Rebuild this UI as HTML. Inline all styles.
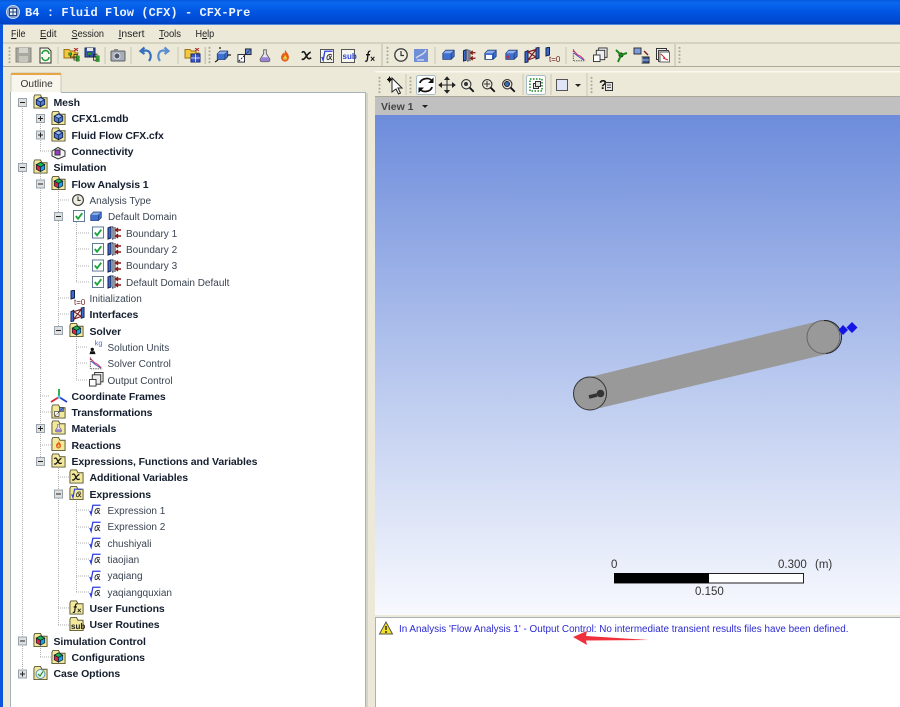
<!DOCTYPE html>
<html><head><meta charset="utf-8"><title>B4 : Fluid Flow (CFX) - CFX-Pre</title>
<style>
html,body{margin:0;padding:0;background:#ece9d8;width:900px;height:707px;overflow:hidden}
svg{display:block;font-family:"Liberation Sans",sans-serif;filter:blur(.3px)}
.m{font-size:10.5px;fill:#222}
.b{font-size:10.5px;font-weight:bold;fill:#141e2e;letter-spacing:-.09px}
.n{font-size:10px;fill:#3a4452}
.l{stroke:#b0b0b0;stroke-width:1;stroke-dasharray:1 1;fill:none}
.s{font-size:11.5px;fill:#333}
</style></head><body>
<svg width="900" height="707" viewBox="0 0 900 707" xmlns="http://www.w3.org/2000/svg">
<defs>
<linearGradient id="tb" x1="0" y1="0" x2="0" y2="1"><stop offset="0" stop-color="#0758dc"/><stop offset=".12" stop-color="#0a68ee"/><stop offset=".5" stop-color="#0055e2"/><stop offset=".9" stop-color="#0048d0"/><stop offset="1" stop-color="#0040b8"/></linearGradient>
<linearGradient id="vp" x1="0" y1="0" x2="0" y2="1"><stop offset="0" stop-color="#6d8cdb"/><stop offset=".55" stop-color="#bccbef"/><stop offset="1" stop-color="#f8f9fe"/></linearGradient>
<symbol id="f" viewBox="0 0 16 16"><path d="M1 3V15H15V4H9.500L8 1H2Z" fill="#f3e99c" stroke="#5a5636"/></symbol>
<symbol id="cb" viewBox="0 0 16 16"><path d="M8 3.500L12.500 6V11L8 13.500L3.500 11V6Z" fill="#4f7bd4" stroke="#13254d"/><path d="M3.500 6L8 8.500L12.500 6M8 8.500V13.500" fill="none" stroke="#13254d" stroke-width=".8"/><path d="M8 4.500L11.200 6.300L8 7.800L4.800 6.300Z" fill="#9cbcf0"/></symbol>
<symbol id="cc" viewBox="0 0 16 16"><path d="M3.500 6L8 3.500L12.500 6L8 8.500Z" fill="#19b84a" stroke="#123" stroke-width=".8"/><path d="M3.500 6V11L8 13.500V8.500Z" fill="#e0203c" stroke="#123" stroke-width=".8"/><path d="M12.500 6V11L8 13.500V8.500Z" fill="#1fa0e0" stroke="#123" stroke-width=".8"/></symbol>
<symbol id="mesh" viewBox="0 0 16 16"><use href="#f" width="16" height="16"/><use href="#cb" width="16" height="16"/></symbol>
<symbol id="sim" viewBox="0 0 16 16"><use href="#f" width="16" height="16"/><use href="#cc" width="16" height="16"/></symbol>
<symbol id="chk" viewBox="0 0 13 13"><rect x=".5" y=".5" width="12" height="12" fill="#fff" stroke="#55718f"/><path d="M3 6.500L5.500 9.500L10 3.500" fill="none" stroke="#1da53c" stroke-width="2"/></symbol>
<symbol id="bd" viewBox="0 0 14 14"><path d="M1 2L4 .8V12L1 13Z" fill="#3e68cc" stroke="#10204c"/><path d="M5 1H6V13H5" fill="none" stroke="#10204c"/><path d="M8 1V13" stroke="#222" fill="none"/><path d="M14 4H9M11 2L9 4L11 6M14 10H9M11 8L9 10L11 12" fill="none" stroke="#861414" stroke-width="1.400"/></symbol>
<symbol id="ex" viewBox="0 0 14 14"><path d="M1 8L2.500 12L4.500 1.500H13.500" fill="none" stroke="#2b3fe0" stroke-width="1.500"/><path d="M12.500 5.500C9 4 6.500 7 7 10C7.600 12.500 10 11 12.500 6.500M9.500 6.500C11 9 11 11 13 11.500" fill="none" stroke="#333" stroke-width="1.100"/></symbol>
<symbol id="clk" viewBox="0 0 16 16"><circle cx="8" cy="8" r="6.200" fill="#f0eee0" stroke="#444" stroke-width="1.400"/><path d="M8 4V8.500H11" fill="none" stroke="#333" stroke-width="1.200"/></symbol>
<symbol id="dom" viewBox="0 0 16 16"><path d="M1.500 6L5 2.500H14.500V9.500L11 13H1.500Z" fill="#3f70d0" stroke="#1c3a76" stroke-width=".9"/><path d="M11 6V13M11 6L14.500 2.500" fill="none" stroke="#1c3a76" stroke-width=".9"/><path d="M2 6H10.500L14 3H5Z" fill="#8fb0ec"/></symbol>
<symbol id="ifc" viewBox="0 0 16 16"><path d="M1 5L4 3.500V15L1 15.500ZM12 1L15 .5V11L12 12Z" fill="#3e68cc" stroke="#10204c"/><path d="M4 5L12 2.500M4 13L12 10M4 5L12 10M4 13L12 2.500" stroke="#7c1a1a" stroke-width="1.200" fill="none"/></symbol>
<symbol id="init" viewBox="0 0 16 16"><path d="M1 1L4.500 0V8L1 9Z" fill="#3e68cc" stroke="#10204c"/><text x="4" y="15" font-size="8" fill="#6a1e1e">t=0</text></symbol>
<symbol id="units" viewBox="0 0 16 16"><circle cx="3.500" cy="10" r="1.800" fill="#111"/><path d="M.5 15L1.500 12H6L7 15Z" fill="#111"/><text x="6" y="6" font-size="8" fill="#5470c8">kg</text></symbol>
<symbol id="ctl" viewBox="0 0 16 16"><path d="M1.500 1V14H15" fill="none" stroke="#222" stroke-dasharray="1 1"/><path d="M1.500 2L6 7L10 9L14 13" fill="none" stroke="#d03060" stroke-width="1.200"/><path d="M2 5L7 9L13 13" fill="none" stroke="#4050d0"/></symbol>
<symbol id="out" viewBox="0 0 16 16"><rect x="6" y=".5" width="9" height="10" fill="#eee" stroke="#333"/><rect x="3.500" y="3" width="9" height="10" fill="#eee" stroke="#333"/><rect x=".5" y="8" width="7" height="7" fill="#fff" stroke="#333"/></symbol>
<symbol id="co" viewBox="0 0 18 16"><path d="M9 9V1" stroke="#1aa83c" stroke-width="1.800"/><path d="M9 9L1 14" stroke="#e02030" stroke-width="1.800"/><path d="M9 9L17 14" stroke="#2040d8" stroke-width="1.800"/><circle cx="9" cy="9" r="1.500" fill="#60c0e0"/></symbol>
<symbol id="x" viewBox="0 0 16 16"><path d="M3 5C5 3 6 4 7.500 7.500C9 11 10 12.500 13 10.500M12.500 4.500C10 5 8 9 5.500 11.500C4.500 12.500 3.500 12 3 11.500" fill="none" stroke="#171717" stroke-width="1.700"/></symbol>
<symbol id="fx" viewBox="0 0 16 16"><path d="M8.500 2.500C6.500 2 6 3.500 5.700 6L5 12C4.700 14 3.500 14.500 2.500 13.500M3.500 6.500H8" fill="none" stroke="#111" stroke-width="1.500"/><path d="M9 9L13 13.500M13 9L9 13.500" stroke="#111" stroke-width="1.100"/></symbol>
<symbol id="flask" viewBox="0 0 16 16"><path d="M6 1.500H10M6.500 2V6L2.500 12C2 14 3 15 4.500 15H11.500C13 15 14 14 13.500 12L9.500 6V2" fill="#e6e6f2" stroke="#555"/><path d="M4.500 10H11.500L13 13C13 14 12.500 14.500 11.500 14.500H4.500C3.500 14.500 3 14 3 13Z" fill="#9a80d8"/></symbol>
<symbol id="fire" viewBox="0 0 16 16"><path d="M8 1C9 4 12.500 6 12.500 10C12.500 13 10.500 15 8 15C5.500 15 3.500 13 3.500 10C3.500 8 5 7 6 4.500C6.500 5.500 7 6 7 6C8 5 8 3 8 1Z" fill="#e85c10"/><path d="M8 7C9 9 10.500 10 10 12C9.500 13.500 6.500 13.500 6 12C5.600 10.500 7.500 9.500 8 7Z" fill="#fcd840"/><path d="M8 10.500C8.600 11.500 8.800 12.500 8 13C7.200 12.500 7.400 11.500 8 10.500Z" fill="#4070e0"/></symbol>
<symbol id="tf" viewBox="0 0 16 16"><rect x="1" y="7" width="7" height="8" fill="#fff" stroke="#223"/><rect x="9" y="1" width="6" height="6" fill="#5b84d8" stroke="#223"/><path d="M2 14L14 2" stroke="#222" stroke-dasharray="2 1.200"/></symbol>
<symbol id="grip" viewBox="0 0 3 20"><path d="M1.500 1V19" stroke="#a9a794" stroke-width="2" stroke-dasharray="2 2"/></symbol>
<symbol id="mag" viewBox="0 0 18 18"><circle cx="7.500" cy="7.500" r="5.600" fill="#eceadb" stroke="#333" stroke-width="1.300"/><path d="M11.500 11.500L16.500 16.500" stroke="#111" stroke-width="2.200"/></symbol>
<symbol id="net" viewBox="0 0 16 12"><path d="M3 2.500V6H13M8 6V10H13M8 6V2.500H13" fill="none" stroke="#222"/><g fill="#2ea82e" stroke="#0d4d0d" stroke-width=".6"><rect x="1" y=".5" width="4" height="3"/><rect x="11" y="4.500" width="4" height="3"/><rect x="11" y="8.500" width="4" height="3"/></g></symbol>
<symbol id="open" viewBox="0 0 16 11"><path d="M1 10V1.500H6L7.500 3H12V5H15L13 10Z" fill="#f2c83c" stroke="#9a7416"/><path d="M11 0L15 3M15 0L11 3" stroke="#b02020" stroke-width="1"/></symbol>
</defs>

<!-- window chrome -->
<rect width="900" height="24" fill="url(#tb)"/>
<rect y="24" width="900" height="1" fill="#4f86e0"/>
<rect x="0" y="24" width="3" height="683" fill="#0a55dc"/>
<circle cx="13" cy="12" r="6.500" fill="#7d9bc8" stroke="#cfdcf0"/>
<rect x="9.500" y="8.500" width="7" height="7" fill="#e8eef8" stroke="#25457c"/>
<path d="M13 8.500V15.500M9.500 12H16.500" stroke="#25457c"/>
<text x="25" y="16" font-family="Liberation Mono" font-size="12" font-weight="bold" fill="#eef4ff" letter-spacing=".07">B4 : Fluid Flow (CFX) - CFX-Pre</text>

<!-- menu -->
<text class="m" x="11" y="37" textLength="14.500" lengthAdjust="spacingAndGlyphs"><tspan text-decoration="underline">F</tspan>ile</text>
<text class="m" x="40" y="37" textLength="16.500" lengthAdjust="spacingAndGlyphs"><tspan text-decoration="underline">E</tspan>dit</text>
<text class="m" x="71.500" y="37" textLength="32.500" lengthAdjust="spacingAndGlyphs"><tspan text-decoration="underline">S</tspan>ession</text>
<text class="m" x="118.500" y="37" textLength="26" lengthAdjust="spacingAndGlyphs"><tspan text-decoration="underline">I</tspan>nsert</text>
<text class="m" x="159" y="37" textLength="22" lengthAdjust="spacingAndGlyphs"><tspan text-decoration="underline">T</tspan>ools</text>
<text class="m" x="195.500" y="37" textLength="18.700" lengthAdjust="spacingAndGlyphs">H<tspan text-decoration="underline">e</tspan>lp</text>
<rect x="3" y="42" width="897" height="2" fill="#d6d2c0"/>
<rect x="3" y="66" width="897" height="1" fill="#aca899"/>
<rect x="3" y="67" width="897" height="5" fill="#ece9d8"/>

<!-- main toolbar -->
<use href="#grip" x="8" y="46" width="3" height="18"/>
<g><rect x="16" y="48" width="15" height="14" fill="#a8a8a0" stroke="#87877f"/><rect x="19" y="48" width="9" height="5" fill="#d4d4cc"/><rect x="19" y="56" width="9" height="6" fill="#c6c6bc"/></g>
<g><path d="M40 48H48L51 51V63H40Z" fill="#fbfbf0" stroke="#333"/><path d="M42 54A3.500 3.500 0 0 1 49 54M49 57A3.500 3.500 0 0 1 42 57" fill="none" stroke="#1a9a30" stroke-width="1.500"/></g>
<rect x="57.500" y="47" width="1" height="17" fill="#c9c6b4"/>
<use href="#open" x="63" y="48" width="16" height="11"/><use href="#net" x="68" y="52" width="12" height="10"/>
<g><rect x="85" y="48" width="10" height="9" fill="#3c58b0" stroke="#1a2a60"/><rect x="87" y="48" width="6" height="3" fill="#e8e8e8"/></g><use href="#net" x="87" y="52" width="13" height="10"/>
<rect x="104.500" y="47" width="1" height="17" fill="#c9c6b4"/>
<g><rect x="111" y="51" width="14" height="10" rx="1" fill="#a9adb5" stroke="#5c6068"/><circle cx="117" cy="56" r="3" fill="#505864" stroke="#dde"/><rect x="114" y="49" width="4" height="2" fill="#888"/></g>
<rect x="130.500" y="47" width="1" height="17" fill="#c9c6b4"/>
<path d="M149 61C152 57 151 51 146 50.500L142 51M144.500 47.500L140.500 51L144.500 54" fill="none" stroke="#3470c0" stroke-width="2.200"/>
<path d="M160 61C157 57 158 51 163 50.500L167 51M164.500 47.500L168.500 51L164.500 54" fill="none" stroke="#5d8fd0" stroke-width="2.200"/>
<rect x="177.500" y="47" width="1" height="17" fill="#c9c6b4"/>
<use href="#open" x="184" y="48" width="16" height="11"/><rect x="191" y="54" width="9" height="8" fill="#3c58c8" stroke="#1a2a70"/><path d="M195.500 54V62M191 58H200" stroke="#fff" stroke-width=".7"/>
<rect x="204.500" y="47" width="1.500" height="17" fill="#c9c6b4"/>
<use href="#grip" x="208" y="46" width="3" height="18"/>
<use href="#dom" x="216" y="49" width="13" height="13"/><path d="M227 55H231M220 49V47M218 60L215 62" stroke="#222" stroke-width="1.300"/>
<use href="#tf" x="237" y="48" width="15" height="15"/>
<use href="#flask" x="258" y="48" width="14" height="15"/>
<use href="#fire" x="278" y="48" width="14" height="15"/>
<use href="#x" x="299" y="48" width="15" height="15"/>
<g><rect x="320.500" y="49.500" width="13" height="13" fill="#f6f6f0" stroke="#555"/><use href="#ex" x="321" y="50" width="12" height="12"/></g>
<g><rect x="341.500" y="49.500" width="13" height="13" fill="#f6f6f0" stroke="#555"/><text x="342.500" y="59" font-size="8" font-weight="bold" fill="#2840d8">sub</text></g>
<use href="#fx" x="363" y="49" width="14" height="14"/>
<rect x="381.500" y="44" width="1" height="22" fill="#bdb9a6"/>
<use href="#grip" x="386" y="46" width="3" height="18"/>
<use href="#clk" x="393" y="47" width="16" height="16"/>
<g><rect x="414" y="49" width="14" height="13" fill="#6f90d8"/><path d="M416 58C419 55 424 55 426 50M417 60H424" stroke="#dde" fill="none" stroke-width="1.300"/></g>
<rect x="434.500" y="47" width="1" height="17" fill="#c9c6b4"/>
<use href="#dom" x="441" y="48" width="15" height="14"/>
<use href="#bd" x="462" y="49" width="14" height="13"/>
<use href="#dom" x="483" y="48" width="15" height="14"/><rect x="486" y="55" width="6" height="4" fill="#fff"/>
<use href="#dom" x="504" y="48" width="15" height="14"/><path d="M506 57H510M508 55V59" stroke="#d02020"/>
<use href="#ifc" x="524" y="47" width="16" height="16"/>
<use href="#init" x="545" y="47" width="16" height="16"/>
<rect x="565.500" y="47" width="1" height="17" fill="#c9c6b4"/>
<use href="#ctl" x="572" y="48" width="14" height="15"/>
<use href="#out" x="593" y="47" width="15" height="16"/>
<g><circle cx="621" cy="55" r="2.500" fill="#222"/><path d="M621 55L616 50M621 55L627 53M621 55L618 62" stroke="#1a8a1a" stroke-width="2"/></g>
<g><rect x="634" y="48" width="7" height="6" fill="#7c9de0" stroke="#333"/><rect x="642" y="57" width="7" height="6" fill="#3c5aa0" stroke="#222"/><path d="M642 57V63M642 60H649" stroke="#fff" stroke-width=".6"/><path d="M644 51L648 55" stroke="#7a1a1a" stroke-width="1.400"/></g>
<g><rect x="656.500" y="48.500" width="10" height="11" fill="#eee" stroke="#333"/><rect x="658.500" y="50.500" width="10" height="11" fill="#ddd" stroke="#444"/><rect x="660" y="52" width="9.500" height="10" fill="#fff" stroke="#666"/><path d="M661 54L665 58M663 58L668 60" stroke="#d03030" stroke-width="1"/></g>
<rect x="674.500" y="44" width="1" height="22" fill="#bdb9a6"/>
<use href="#grip" x="678" y="46" width="3" height="18"/>

<!-- left panel -->
<path d="M11 92.500V74.500Q11 73 12.500 73H60Q61 73 61 74.500V92.500" fill="#f8f6ec" stroke="#c9c6b4"/>
<rect x="11" y="73" width="50" height="2" fill="#e9a544"/>
<text x="20.500" y="87" font-size="10.200" fill="#333">Outline</text>
<rect x="10.500" y="92.500" width="355" height="620" fill="#fff" stroke="#a8b2bd"/>
<rect x="11" y="92" width="50" height="2" fill="#fff"/>
<rect x="366" y="93" width="2" height="614" fill="#d6d4c6"/>

<!-- tree lines -->
<path class="l" d="M22.500 108V670M40.500 124V151M40.500 172V461M40.500 646V657M58.500 189V330M58.500 466V625M76.500 222V282M76.500 336V380M76.500 499V592
M40 151H52M40 396H50M40 412H52M40 445H52M40 657H52M58 200H70M58 298H70M58 314H70M58 477H70M58 608H70M58 625H70
M76 233H90M76 249H90M76 266H90M76 282H90M76 347H88M76 363H88M76 380H88M76 510H89M76 527H89M76 543H89M76 559H89M76 576H89M76 592H89"/>

<!-- expanders -->
<g fill="#dfe0dc" stroke="#97a3b0">
<rect x="18.500" y="98.500" width="8" height="8"/><rect x="36.500" y="114.500" width="8" height="8"/><rect x="36.500" y="131" width="8" height="8"/>
<rect x="18.500" y="163.500" width="8" height="8"/><rect x="36.500" y="180" width="8" height="8"/><rect x="54.500" y="212.500" width="8" height="8"/>
<rect x="54.500" y="326.500" width="8" height="8"/><rect x="36.500" y="424.500" width="8" height="8"/><rect x="36.500" y="457.500" width="8" height="8"/>
<rect x="54.500" y="490" width="8" height="8"/><rect x="18.500" y="637" width="8" height="8"/><rect x="18.500" y="670" width="8" height="8"/>
</g>
<path stroke="#222" fill="none" d="M20 102.500H25M38 118.500H43M40.500 116V121M38 135H43M40.500 132.500V137.500M20 167.500H25M38 184H43M56 216.500H61M56 330.500H61M38 428.500H43M40.500 426V431M38 461.500H43M56 494H61M20 641H25M20 674H25M22.500 671.500V676.500"/>

<!-- tree icons -->
<use href="#mesh" x="33" y="94" width="15" height="15"/>
<use href="#mesh" x="51" y="110.500" width="15" height="15"/>
<use href="#mesh" x="51" y="127" width="15" height="15"/>
<g><path d="M52 151L58 147.500L65 151V156L58 159L52 156Z" fill="#f4f4f4" stroke="#333"/><path d="M55 150L60 150V155L55 155Z" fill="#9a3cc8" stroke="#333"/></g>
<use href="#sim" x="33" y="159" width="15" height="15"/>
<use href="#sim" x="51" y="175.500" width="15" height="15"/>
<use href="#clk" x="71" y="193" width="14" height="14"/>
<use href="#chk" x="73" y="210" width="12" height="12"/>
<use href="#dom" x="89" y="210" width="14" height="13"/>
<use href="#chk" x="92" y="226.500" width="12" height="12"/><use href="#bd" x="107" y="226" width="14" height="14"/>
<use href="#chk" x="92" y="243" width="12" height="12"/><use href="#bd" x="107" y="242" width="14" height="14"/>
<use href="#chk" x="92" y="259.500" width="12" height="12"/><use href="#bd" x="107" y="259" width="14" height="14"/>
<use href="#chk" x="92" y="276" width="12" height="12"/><use href="#bd" x="107" y="275" width="14" height="14"/>
<use href="#init" x="70" y="290" width="16" height="16"/>
<use href="#ifc" x="70" y="307" width="15" height="15"/>
<use href="#sim" x="69" y="322.500" width="15" height="15"/>
<use href="#units" x="89" y="340" width="15" height="15"/>
<use href="#ctl" x="89" y="356" width="14" height="15"/>
<use href="#out" x="89" y="372" width="15" height="15"/>
<use href="#co" x="50" y="388" width="18" height="16"/>
<use href="#f" x="51" y="404" width="15" height="15"/><use href="#tf" x="54" y="407" width="10" height="10"/>
<use href="#f" x="51" y="420" width="15" height="15"/><use href="#flask" x="54" y="423" width="9" height="10"/>
<use href="#f" x="51" y="436.500" width="15" height="15"/><use href="#fire" x="54" y="439" width="9" height="11"/>
<use href="#f" x="51" y="453" width="15" height="15"/><use href="#x" x="52" y="455" width="12" height="12"/>
<use href="#f" x="69" y="469" width="15" height="15"/><use href="#x" x="70" y="471" width="12" height="12"/>
<use href="#f" x="69" y="485.500" width="15" height="15"/><use href="#ex" x="71" y="488" width="11" height="11"/>
<use href="#ex" x="89" y="503" width="12" height="14"/>
<use href="#ex" x="89" y="520" width="12" height="14"/>
<use href="#ex" x="89" y="536" width="12" height="14"/>
<use href="#ex" x="89" y="552" width="12" height="14"/>
<use href="#ex" x="89" y="569" width="12" height="14"/>
<use href="#ex" x="89" y="585" width="12" height="14"/>
<use href="#f" x="69" y="600" width="15" height="15"/><use href="#fx" x="71" y="602" width="12" height="12"/>
<use href="#f" x="69" y="616.500" width="15" height="15"/><text x="71" y="629" font-size="8" font-weight="bold" fill="#222">sub</text>
<use href="#sim" x="33" y="632.500" width="15" height="15"/>
<use href="#sim" x="51" y="649.500" width="15" height="15"/>
<use href="#f" x="33" y="665.500" width="15" height="15"/><circle cx="40.500" cy="674" r="4.500" fill="#eaf4ee" stroke="#6090b0"/><path d="M38 674L40 676L43 671.500" stroke="#2a9a40" fill="none" stroke-width="1.300"/>

<!-- tree text -->
<text class="b" x="53.500" y="106">Mesh</text>
<text class="b" x="71.500" y="122">CFX1.cmdb</text>
<text class="b" x="71.500" y="139">Fluid Flow CFX.cfx</text>
<text class="b" x="71.500" y="155">Connectivity</text>
<text class="b" x="53.500" y="171">Simulation</text>
<text class="b" x="71.500" y="188">Flow Analysis 1</text>
<text class="n" x="89.500" y="204">Analysis Type</text>
<text class="n" x="108" y="220">Default Domain</text>
<text class="n" x="126" y="237">Boundary 1</text>
<text class="n" x="126" y="253">Boundary 2</text>
<text class="n" x="126" y="269">Boundary 3</text>
<text class="n" x="126" y="286">Default Domain Default</text>
<text class="n" x="89.500" y="302">Initialization</text>
<text class="b" x="89.500" y="318">Interfaces</text>
<text class="b" x="89.500" y="335">Solver</text>
<text class="n" x="107.500" y="351">Solution Units</text>
<text class="n" x="107.500" y="367">Solver Control</text>
<text class="n" x="107.500" y="384">Output Control</text>
<text class="b" x="71.500" y="400">Coordinate Frames</text>
<text class="b" x="71.500" y="416">Transformations</text>
<text class="b" x="71.500" y="432">Materials</text>
<text class="b" x="71.500" y="449">Reactions</text>
<text class="b" x="71.500" y="465">Expressions, Functions and Variables</text>
<text class="b" x="89.500" y="481">Additional Variables</text>
<text class="b" x="89.500" y="498">Expressions</text>
<text class="n" x="107.500" y="514">Expression 1</text>
<text class="n" x="107.500" y="530">Expression 2</text>
<text class="n" x="107.500" y="547">chushiyali</text>
<text class="n" x="107.500" y="563">tiaojian</text>
<text class="n" x="107.500" y="579">yaqiang</text>
<text class="n" x="107.500" y="596">yaqiangquxian</text>
<text class="b" x="89.500" y="612">User Functions</text>
<text class="b" x="89.500" y="628">User Routines</text>
<text class="b" x="53.500" y="645">Simulation Control</text>
<text class="b" x="71.500" y="661">Configurations</text>
<text class="b" x="53.500" y="677">Case Options</text>

<!-- right toolbar -->
<rect x="375" y="71" width="525" height="1.500" fill="#faf8f0"/>
<rect x="375" y="96" width="525" height="1" fill="#aca899"/>
<use href="#grip" x="378" y="76" width="3" height="18"/>
<g><path d="M392 78L392 92L396 89L398.500 94L400.500 93L398 88L402 88Z" fill="#fff" stroke="#222"/><path d="M388 78L391 81M391 78L388 81M389.500 76.500V82.500M387 79.500H392.500" stroke="#111"/></g>
<rect x="405.500" y="74" width="1" height="21" fill="#c9c6b4"/>
<use href="#grip" x="409" y="76" width="3" height="18"/>
<rect x="416.500" y="75.500" width="19" height="19" rx="2" fill="#fff" stroke="#a7bcc8"/>
<path d="M420 83C421 78 430 77 432 81M432 87C431 92 422 93 420 89" fill="none" stroke="#111" stroke-width="1.800"/><path d="M433.500 77.500V83H428ZM418.500 93V87.500H424Z" fill="#111"/>
<path d="M447 79V91M441 85H453M447 77L445 79.500H449ZM447 93L445 90.500H449ZM439 85L441.500 83V87ZM455 85L452.500 83V87Z" stroke="#222" fill="#222"/>
<use href="#mag" x="460" y="78" width="15" height="15"/><circle cx="466" cy="84" r="2" fill="#333"/>
<use href="#mag" x="481" y="78" width="15" height="15"/><path d="M484 84H490M487 81V87" stroke="#333"/>
<use href="#mag" x="501" y="78" width="15" height="15"/><circle cx="507" cy="84" r="2.500" fill="#3d6cc0" stroke="#222"/>
<rect x="522.500" y="74" width="1" height="21" fill="#c9c6b4"/>
<rect x="526.500" y="75.500" width="19" height="19" rx="2" fill="#fff" stroke="#a7bcc8"/>
<rect x="530" y="79" width="12" height="12" fill="none" stroke="#1c8a2a" stroke-width="1.500" stroke-dasharray="1.500 1.500"/>
<rect x="533.500" y="83.500" width="5" height="5" fill="#e4e4e0" stroke="#333"/><rect x="535.500" y="81.500" width="5" height="5" fill="#e4e4e0" stroke="#333"/>
<rect x="550.500" y="74" width="1" height="21" fill="#c9c6b4"/>
<rect x="556.500" y="79.500" width="11" height="11" fill="#dfe4f6" stroke="#555"/>
<path d="M575 84H581L578 87Z" fill="#222"/>
<rect x="586.500" y="73" width="1" height="23" fill="#c9c6b4"/>
<use href="#grip" x="590" y="76" width="3" height="18"/>
<text x="599" y="89" font-size="13" font-weight="bold" fill="#111">?</text>
<rect x="605.500" y="82.500" width="7" height="8" fill="#e4e4e4" stroke="#333"/><path d="M607 85H611M607 87.500H611" stroke="#555"/>

<!-- view bar -->
<rect x="375" y="97" width="525" height="18" fill="#c0c0c0"/>
<text x="381" y="110" font-size="10.500" font-weight="bold" fill="#444">View 1</text>
<path d="M422 105H428L425 108Z" fill="#222"/>

<!-- viewport -->
<rect x="375" y="115" width="525" height="500" fill="url(#vp)"/>
<path d="M590 377L819 321L827 354L600 408Z" fill="#999"/>
<circle cx="590" cy="393.500" r="16.500" fill="#989898" stroke="#333"/>
<circle cx="823.500" cy="337" r="16.500" fill="#999" stroke="#666"/>
<path d="M824 320.500A16.500 16.500 0 0 1 826 353.500" fill="none" stroke="#222"/>
<path d="M589 397L597 395" stroke="#333" stroke-width="3.500"/><circle cx="600.500" cy="393.500" r="3.800" fill="#333"/>
<path d="M843 325L848 330L843 335L838.500 330Z" fill="#1414e8"/><path d="M852 322L857.500 327.500L852 333L846.500 327.500Z" fill="#1414e8"/>
<text class="s" x="611" y="568">0</text>
<text class="s" x="778" y="568">0.300</text>
<text class="s" x="815" y="568">(m)</text>
<rect x="614.500" y="573.500" width="189" height="9.500" fill="#fff" stroke="#222"/>
<rect x="614" y="573" width="95" height="10" fill="#000"/>
<text class="s" x="695" y="595">0.150</text>

<!-- message panel -->
<rect x="375" y="615" width="525" height="2" fill="#ece9d8"/>
<rect x="375.500" y="617.500" width="525" height="90" fill="#fff" stroke="#a8b2bd"/>
<path d="M386 622L392.500 634H379.500Z" fill="#f4e020" stroke="#555"/><path d="M386 626V630M386 631V633" stroke="#111" stroke-width="1.300"/>
<text x="399" y="632" font-size="9.900" fill="#2a2ad0">In Analysis 'Flow Analysis 1' - Output Control: No intermediate transient results files have been defined.</text>
<path d="M573 637L587 631L586 636L649 640L586 640.500L587 645Z" fill="#f0303a"/>
</svg>
</body></html>
